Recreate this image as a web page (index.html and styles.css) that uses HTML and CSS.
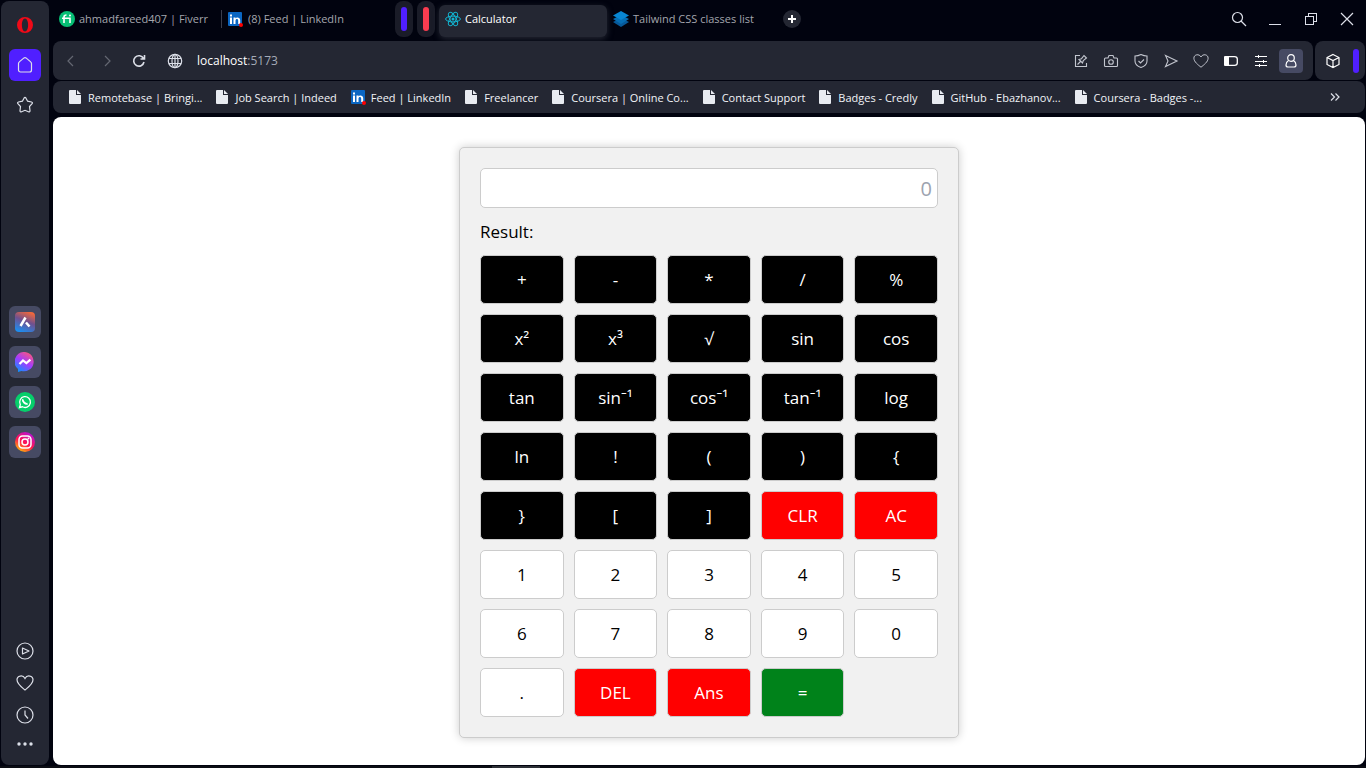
FILE: index.html
```html
<!DOCTYPE html>
<html lang="en">
<head>
<meta charset="utf-8">
<meta name="viewport" content="width=device-width, initial-scale=1">
<title>Calculator</title>
<link rel="stylesheet" href="styles.css">
</head>
<body>
<svg class="defs" aria-hidden="true">
  <defs>
    <symbol id="file" viewBox="0 0 12 14"><path fill="#e8ebf1" d="M1 0h6v5h5v8a1 1 0 0 1-1 1H1a1 1 0 0 1-1-1V1a1 1 0 0 1 1-1zM8 0l4 4H8z"/></symbol>
    <symbol id="linkedin" viewBox="0 0 16 16"><rect width="14" height="14" x="0" y="1" rx="1" fill="#0a66c2"/><path fill="#fff" d="M2 6.500h2v6.500H2zM2 3.500h2v2H2zM5.500 6.500h2v1c1-1.700 4.700-1.500 4.700 1.700V13h-2V9.700c0-2.200-2.700-2-2.700 0V13h-2z"/><circle cx="13" cy="14" r="2" fill="#f00"/></symbol>
    <symbol id="heart" viewBox="0 0 18 18"><path d="M9 16C6 13.500 1 10 1 5.800 1 1.500 7 .5 9 4.500c2-4 8-3 8 1.300C17 10 12 13.500 9 16z"/></symbol>
  </defs>
</svg>
<div class="browser">
  <nav class="sidebar" aria-label="Sidebar">
    <div class="side-group side-top">
      <button class="side-btn" aria-label="Opera menu"><svg width="18" height="18" viewBox="0 0 18 18"><path fill="#f00a18" fill-rule="evenodd" d="M9 1a8 8 0 1 1 0 16A8 8 0 0 1 9 1zM9 2.500c-2 0-3.100 3-3.100 6.500s1.100 6.500 3.100 6.500 3.100-3 3.100-6.500S11 2.500 9 2.500z"/></svg></button>
      <button class="side-btn home" aria-label="Home"><svg class="line" width="18" height="18" viewBox="0 0 18 18"><path d="M2.500 7.500Q2.500 6.500 3.300 5.900L8 1.900Q9 1.200 10 1.900l4.700 4Q15.500 6.500 15.500 7.500V14a2 2 0 0 1-2 2h-9a2 2 0 0 1-2-2z"/></svg></button>
      <button class="side-btn" aria-label="Pinboards"><svg class="line" width="18" height="18" viewBox="0 0 18 18"><path d="M8 2.200q1-1.500 2 0L11.600 5.200 15.500 6q1.500.5.600 1.700L13.500 10.500l.5 4.200q-.1 1.700-1.600 1.100L9 14.300l-3.400 1.500Q4.100 16.400 4 14.700l.5-4.200L1.900 7.700Q1 6.500 2.500 6l3.900-.8z"/></svg></button>
    </div>
    <div class="side-group side-apps">
      <button class="side-btn app" aria-label="Aria"><svg width="20" height="20" viewBox="0 0 20 20"><defs><linearGradient id="ga" x1=".7" y1="0" x2=".3" y2="1"><stop offset="0" stop-color="#f0683c"/><stop offset=".45" stop-color="#70508f"/><stop offset="1" stop-color="#1d8df0"/></linearGradient></defs><rect width="20" height="20" rx="4" fill="url(#ga)"/><path d="M10.500 5.500 5.500 14M11 10.500l3.500 4" fill="none" stroke="#fff" stroke-width="2.500"/></svg></button>
      <button class="side-btn app" aria-label="Messenger"><svg width="20" height="20" viewBox="0 0 20 20"><defs><linearGradient id="gm" x1=".8" y1="0" x2=".2" y2="1"><stop offset="0" stop-color="#ff5878"/><stop offset=".5" stop-color="#a33bff"/><stop offset="1" stop-color="#0695ff"/></linearGradient></defs><path fill="url(#gm)" d="M10 0a9.700 9.700 0 1 1-3.600 19L3 20v-3A9.700 9.700 0 0 1 10 0z"/><path d="m4.500 12 3.500-3.600 3.400 2.700 4-3.500" fill="none" stroke="#fff" stroke-width="2.200"/></svg></button>
      <button class="side-btn app" aria-label="WhatsApp"><svg width="20" height="20" viewBox="0 0 20 20"><circle cx="10" cy="10" r="10" fill="#06cf6b"/><path d="M4.500 15.500 5.300 12.600A5.400 5.400 0 1 1 7.500 14.800z" fill="none" stroke="#fff" stroke-width="1.300"/><path d="M8 7.300c-1 1.800 2.300 5.300 4.600 4.300" fill="none" stroke="#fff" stroke-width="1.800"/></svg></button>
      <button class="side-btn app" aria-label="Instagram"><svg width="20" height="20" viewBox="0 0 20 20"><defs><linearGradient id="gi" x1=".2" y1="1" x2=".8" y2="0"><stop offset="0" stop-color="#ffc800"/><stop offset=".45" stop-color="#ff1450"/><stop offset="1" stop-color="#b010e0"/></linearGradient></defs><circle cx="10" cy="10" r="10" fill="url(#gi)"/><g fill="none" stroke="#fff" stroke-width="1.500"><rect x="4" y="4" width="12" height="12" rx="3.500"/><circle cx="10" cy="10" r="3"/></g><circle cx="13.500" cy="6.500" r="1" fill="#fff"/></svg></button>
    </div>
    <div class="side-group side-bottom">
      <button class="side-btn short" aria-label="Player"><svg class="line" width="18" height="18" viewBox="0 0 18 18"><circle cx="9" cy="9" r="8"/><path stroke-linejoin="round" d="M6.500 6v6l6.500-3z"/></svg></button>
      <button class="side-btn short" aria-label="Favourites"><svg class="line" width="18" height="18"><use href="#heart"/></svg></button>
      <button class="side-btn short" aria-label="History"><svg class="line" width="18" height="18" viewBox="0 0 18 18"><circle cx="9" cy="9" r="8"/><path d="M9 4.500V9l3 3.500"/></svg></button>
      <button class="side-btn short" aria-label="More"><svg width="18" height="6" viewBox="0 0 18 6"><g fill="#dcdfe8"><circle cx="3" cy="3" r="1.700"/><circle cx="9" cy="3" r="1.700"/><circle cx="15" cy="3" r="1.700"/></g></svg></button>
    </div>
  </nav>

  <div class="window">
    <header class="tabstrip">
      <div class="tabs">
        <button class="tab"><svg width="16" height="16" viewBox="0 0 16 16"><circle cx="8" cy="8" r="8" fill="#07bf75"/><path fill="none" stroke="#fff" stroke-width="1.600" d="M3 7.300h8V12M5 12V6q0-2 2.500-2"/><circle cx="11" cy="4.500" r="1" fill="#fff"/></svg>ahmadfareed407 | Fiverr</button>
        <span class="divider"></span>
        <button class="tab"><svg width="16" height="16"><use href="#linkedin"/></svg>(8) Feed | LinkedIn</button>
      </div>
      <button class="island purple" aria-label="Tab island 1"></button>
      <button class="island red" aria-label="Tab island 2"></button>
      <div class="tab-pair">
        <button class="tab active"><svg width="16" height="16" viewBox="0 0 16 16"><g fill="none" stroke="#13b4d0"><ellipse cx="8" cy="8" rx="7.400" ry="2.900"/><ellipse cx="8" cy="8" rx="7.400" ry="2.900" transform="rotate(60 8 8)"/><ellipse cx="8" cy="8" rx="7.400" ry="2.900" transform="rotate(120 8 8)"/></g><circle cx="8" cy="8" r="1.500" fill="#13b4d0"/></svg>Calculator</button>
        <button class="tab"><svg width="16" height="16" viewBox="0 0 16 16"><path fill="#07599a" d="m0 11 8-4 8 4-8 5z"/><path fill="#066eb5" d="m0 8 8-4 8 4-8 5z"/><path fill="#0886d3" d="m0 4.500 8-4.500 8 4.500-8 4.500z"/></svg>Tailwind CSS classes list</button>
      </div>
      <button class="newtab" aria-label="New tab"><svg width="18" height="18" viewBox="0 0 18 18"><path d="M9 5v8M5 9h8" stroke="#fff" stroke-width="2"/></svg></button>
      <div class="controls">
        <button class="ctl" aria-label="Search"><svg class="line" width="16" height="16" viewBox="0 0 16 16"><circle cx="6.500" cy="6.500" r="5"/><path d="m10 10 5 5"/></svg></button>
        <button class="ctl" aria-label="Minimize"><svg class="line crisp" width="16" height="16" viewBox="0 0 16 16"><path d="M2 13.500h12"/></svg></button>
        <button class="ctl" aria-label="Restore"><svg class="line crisp" width="16" height="16" viewBox="0 0 16 16"><path d="M2.500 5.500h8v8h-8zM5.500 5.500v-3h8v8h-3"/></svg></button>
        <button class="ctl" aria-label="Close"><svg class="line" width="16" height="16" viewBox="0 0 16 16"><path d="m2 2 12 12M14 2 2 14"/></svg></button>
      </div>
    </header>

    <div class="toolbar">
      <div class="address">
        <button class="nav dim" aria-label="Back"><svg class="line" width="16" height="16" viewBox="0 0 16 16"><path d="m10 3-5 5 5 5"/></svg></button>
        <button class="nav dim" aria-label="Forward"><svg class="line" width="16" height="16" viewBox="0 0 16 16"><path d="m6 3 5 5-5 5"/></svg></button>
        <button class="nav reload" aria-label="Reload"><svg class="line bold" width="16" height="16" viewBox="0 0 16 16"><path d="M12.500 5.500A5.200 5.200 0 1 0 13 9M13.500 2v4h-4"/></svg></button>
        <button class="nav site" aria-label="Site information"><svg class="line" width="16" height="16" viewBox="0 0 16 16"><circle cx="8" cy="8" r="6.700"/><ellipse cx="8" cy="8" rx="3" ry="6.700"/><path d="M2 5.500h12M2 10.500h12M8 1.500v13"/></svg></button>
        <div class="url">localhost<span>:5173</span></div>
        <div class="actions">
          <button class="act" aria-label="Edit page"><svg class="line soft" width="16" height="16" viewBox="0 0 16 16"><path d="M7 2.500H2.500v11h11V10M4.500 11.500l3-3M6 6.500l3.500 3.500.8-2.500L13.500 5 11 2.500 8.500 5.700z"/></svg></button>
          <button class="act" aria-label="Snapshot"><svg class="line soft" width="16" height="16" viewBox="0 0 16 16"><path d="M2.500 5H5l1-2.500h4L11 5h2.500q1 0 1 1v6.500q0 1-1 1h-11q-1 0-1-1V6q0-1 1-1z"/><circle cx="8" cy="9" r="2.300"/></svg></button>
          <button class="act" aria-label="Ad blocker"><svg class="line soft" width="16" height="16" viewBox="0 0 16 16"><path d="M8 1.500Q11 3 14 3v5c0 3.500-3 5.500-6 6.500-3-1-6-3-6-6.500V3q3 0 6-1.500zM5.500 8l2 2 3.500-3.500"/></svg></button>
          <button class="act" aria-label="Send to My Flow"><svg class="line soft" width="16" height="16" viewBox="0 0 16 16"><path d="m2.500 2.500 11.500 5.500-11.500 5.500L5 8z"/></svg></button>
          <button class="act" aria-label="Bookmark"><svg class="line soft" width="16" height="16"><use href="#heart"/></svg></button>
          <button class="act" aria-label="Battery saver"><svg width="16" height="16" viewBox="0 0 16 16"><path fill="#fff" d="M2 3h4v10H2a1 1 0 0 1-1-1V4a1 1 0 0 1 1-1z"/><path fill="none" stroke="#fff" stroke-width="1.300" d="M6 3.600h5.500q2.800 0 2.800 2.400v4q0 2.400-2.800 2.400H6"/></svg></button>
          <button class="act" aria-label="Easy setup"><svg class="line crisp white" width="16" height="16" viewBox="0 0 16 16"><path d="M2 3.500h12M2 8.500h12M2 12.500h12M5.500 2v3M10.500 7v3M6.500 11v3"/></svg></button>
          <button class="act profile" aria-label="Profile"><svg class="line white" width="16" height="16" viewBox="0 0 16 16"><circle cx="8" cy="5" r="3.300"/><path d="M5.500 7.500Q3 9 3 12q0 2 2 2h6q2 0 2-2 0-3-2.500-4.500"/></svg></button>
        </div>
      </div>
      <div class="extras">
        <button class="act" aria-label="Extensions"><svg class="line white" width="16" height="16" viewBox="0 0 16 16"><path d="m8 1.500 6 3v7l-6 3-6-3v-7zM2 4.500l6 3 6-3M8 7.500v7"/></svg></button>
        <button class="panel-handle" aria-label="Side panel"></button>
      </div>
    </div>

    <nav class="bookmarks" aria-label="Bookmarks">
      <a href="#"><svg width="12" height="14"><use href="#file"/></svg>Remotebase | Bringi...</a>
      <a href="#"><svg width="12" height="14"><use href="#file"/></svg>Job Search | Indeed</a>
      <a href="#" class="wide-icon"><svg width="16" height="16"><use href="#linkedin"/></svg>Feed | LinkedIn</a>
      <a href="#"><svg width="12" height="14"><use href="#file"/></svg>Freelancer</a>
      <a href="#"><svg width="12" height="14"><use href="#file"/></svg>Coursera | Online Co...</a>
      <a href="#"><svg width="12" height="14"><use href="#file"/></svg>Contact Support</a>
      <a href="#"><svg width="12" height="14"><use href="#file"/></svg>Badges - Credly</a>
      <a href="#"><svg width="12" height="14"><use href="#file"/></svg>GitHub - Ebazhanov...</a>
      <a href="#"><svg width="12" height="14"><use href="#file"/></svg>Coursera - Badges -...</a>
      <button class="more" aria-label="More bookmarks"><svg class="line" width="10" height="8" viewBox="0 0 10 8"><path d="m1 .5 3.500 3.500L1 7.500M5.500.5 9 4 5.500 7.500"/></svg></button>
    </nav>

    <main class="page">
      <section class="calculator">
        <input class="display" type="text" placeholder="0" aria-label="Expression">
        <output class="result">Result:</output>
        <div class="keys">
          <button class="key op">+</button><button class="key op">-</button><button class="key op">*</button><button class="key op">/</button><button class="key op">%</button>
          <button class="key op">x²</button><button class="key op">x³</button><button class="key op">√</button><button class="key op">sin</button><button class="key op">cos</button>
          <button class="key op">tan</button><button class="key op">sin⁻¹</button><button class="key op">cos⁻¹</button><button class="key op">tan⁻¹</button><button class="key op">log</button>
          <button class="key op">ln</button><button class="key op">!</button><button class="key op">(</button><button class="key op">)</button><button class="key op">{</button>
          <button class="key op">}</button><button class="key op">[</button><button class="key op">]</button><button class="key warn">CLR</button><button class="key warn">AC</button>
          <button class="key">1</button><button class="key">2</button><button class="key">3</button><button class="key">4</button><button class="key">5</button>
          <button class="key">6</button><button class="key">7</button><button class="key">8</button><button class="key">9</button><button class="key">0</button>
          <button class="key">.</button><button class="key warn">DEL</button><button class="key warn">Ans</button><button class="key equals">=</button>
        </div>
      </section>
    </main>
  </div>
</div>
<footer class="taskbar"><div class="task"></div></footer>
</body>
</html>
```
FILE: styles.css
```css
* { box-sizing: border-box; }

body {
  display: flex;
  flex-direction: column;
  min-height: 100vh;
  margin: 0;
  background: #01030f;
  color: #000;
  font-family: "Open Sans", "Noto Sans", sans-serif;
  font-size: 12px;
}

button {
  margin: 0;
  padding: 0;
  border: 0;
  background: none;
  color: inherit;
  font: inherit;
}

svg { display: block; flex: none; }

.defs { position: absolute; width: 0; height: 0; }

.line { fill: none; stroke: #dcdfe8; stroke-width: 1.2; }
.line.bold { stroke-width: 1.6; }
.line.white { stroke: #fff; }
.line.soft { stroke: #c3c6cf; stroke-width: 1.1; }
.crisp { shape-rendering: crispEdges; stroke-width: 1; }

.browser {
  display: flex;
  flex: 1;
  gap: 4px;
  padding: 0 1px 1px;
}

/* Sidebar */
.sidebar {
  display: flex;
  flex-direction: column;
  justify-content: space-between;
  flex: none;
  width: 48px;
  margin-top: 1px;
  padding: 8px 0;
  border-radius: 8px;
  background: #242733;
}

.side-group { display: flex; flex-direction: column; align-items: center; gap: 8px; }
.side-top { padding-bottom: 8px; }
.side-bottom { gap: 0; }

.side-btn {
  display: grid;
  place-items: center;
  width: 32px;
  height: 32px;
  border-radius: 6px;
}
.side-btn.home { background: #501fff; }
.side-btn.app { background: #464a63; }
.side-btn.short:last-child { height: 26px; }

/* Window chrome */
.window { display: flex; flex-direction: column; flex: 1; min-width: 0; }

.tabstrip {
  display: flex;
  align-items: center;
  gap: 4px;
  height: 41px;
  padding-bottom: 4px;
  color: #a4a6ad;
  font-size: 11px;
}
.tabs { display: flex; align-items: center; width: 338px; }
.tab-pair { display: flex; align-items: center; }

.tab {
  display: flex;
  align-items: center;
  gap: 4px;
  width: 168px;
  height: 32px;
  padding: 0 6px;
  border-radius: 6px;
  white-space: nowrap;
  text-align: left;
}
.tab.active { margin-top: 4px; padding-bottom: 4px; background: #242733; color: #fff; box-shadow: 0 2px 6px #242733; }
.divider { flex: none; width: 1px; height: 18px; background: #3b3e4c; }

.island { display: grid; place-items: center; width: 18px; height: 36px; border-radius: 8px; background: #1a1c28; }
.island::before { content: ""; width: 6px; height: 24px; border-radius: 3px; background: #501fff; }
.island.red::before { background: #fa3c50; }

.newtab { margin-left: 4px; border-radius: 50%; background: #242733; }
.controls { display: flex; margin-left: auto; }
.ctl { display: grid; place-items: center; width: 36px; height: 32px; }

.toolbar { display: flex; gap: 2px; height: 39px; }
.address, .extras { display: flex; align-items: center; border-radius: 8px; background: #242733; }
.address { flex: 1; padding-right: 10px; }
.extras { width: 50px; justify-content: space-between; padding: 0 6px; }

.nav { display: grid; place-items: center; width: 36px; height: 30px; }
.nav.dim { opacity: .35; }
.nav.reload { width: 28px; }
.nav.site { width: 44px; }

.url { color: #fff; }
.url span { color: #a4abb8; }
.actions { display: flex; gap: 6px; margin-left: auto; }
.act { display: grid; place-items: center; width: 24px; height: 24px; border-radius: 4px; }
.act.profile { background: #464a63; }
.panel-handle { width: 6px; height: 24px; border-radius: 3px; background: #501fff; }

.bookmarks {
  display: flex;
  align-items: center;
  gap: 14px;
  height: 32px;
  margin: 1px 0 4px;
  padding: 0 25px 0 16px;
  border-radius: 8px;
  background: #242733;
  color: #f2f4f8;
  font-size: 11px;
  white-space: nowrap;
}
.bookmarks a { display: flex; align-items: center; gap: 7px; color: inherit; text-decoration: none; }
.bookmarks .wide-icon { gap: 4px; }
.more { margin-left: auto; }

/* Page */
.page { flex: 1; padding: 30px 20px 27px; border-radius: 8px; background: #fff; }

.calculator {
  max-width: 500px;
  margin: 0 auto;
  padding: 20px;
  border: 1px solid #ccc;
  border-radius: 5px;
  background: #f1f1f1;
  box-shadow: 0 0 10px rgba(0, 0, 0, .2);
  font-size: 17px;
}

.display {
  display: block;
  width: 100%;
  height: 40px;
  padding: 5px;
  border: 1px solid #ccc;
  border-radius: 5px;
  background: #fff;
  font: inherit;
  font-size: 20px;
  text-align: right;
}
.display::placeholder { color: #9ca3af; }

.result { display: block; margin: 10px 0; line-height: 27px; }

.keys { display: grid; grid-template-columns: repeat(5, 1fr); gap: 10px; }
.key {
  padding: 10px;
  border: 1px solid #ccc;
  border-radius: 5px;
  background: #fff;
  line-height: 27px;
}
.key.op { background: #000; color: #fff; }
.key.warn { background: #f00; color: #fff; }
.key.equals { background: #00821a; color: #fff; }

/* Desktop taskbar edge */
.taskbar { height: 2px; padding-left: 36%; background: #0b0d14; }
.task { width: 48px; height: 2px; background: #2c2f36; }
```
